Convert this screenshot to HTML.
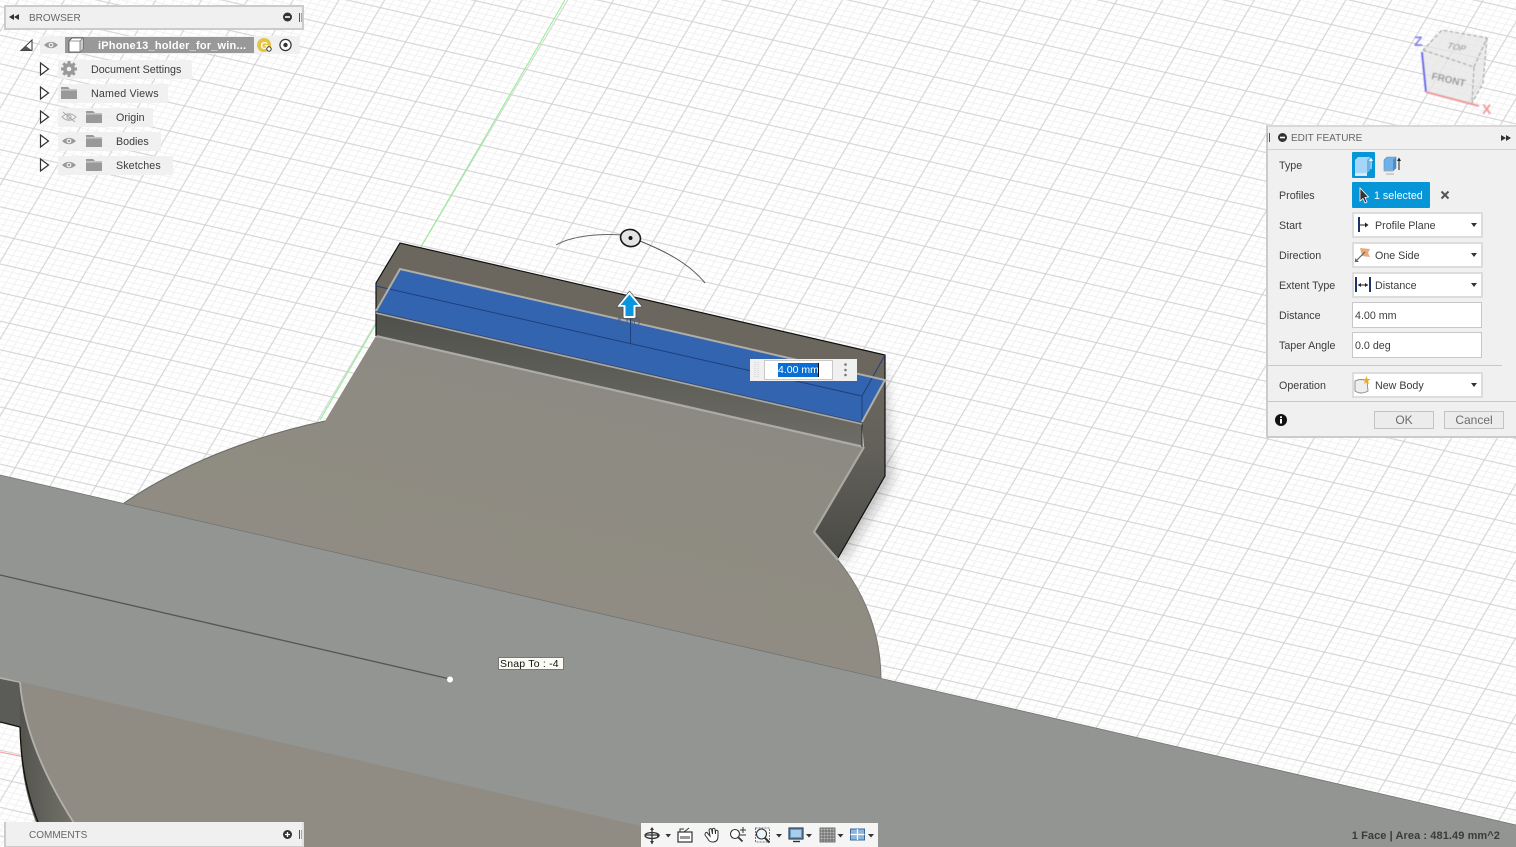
<!DOCTYPE html>
<html>
<head>
<meta charset="utf-8">
<title>Edit Feature</title>
<style>
html,body{margin:0;padding:0;width:1516px;height:847px;overflow:hidden;background:#fff;}
body{position:relative;font-family:"Liberation Sans",sans-serif;font-size:10.7px;color:#3c3c3c;}
.a{position:absolute;white-space:nowrap;}
svg{position:absolute;left:0;top:0;overflow:visible;}
.panel{position:absolute;background:#f0f0f0;box-sizing:border-box;border:2px solid #cbcbcb;}
.row{position:absolute;background:rgba(240,240,240,.9);}
.lab{position:absolute;left:1279px;line-height:14px;white-space:nowrap;}
.box{position:absolute;left:1352px;width:131px;height:26px;box-sizing:border-box;background:#fff;border:2px solid #dcdcdc;line-height:24px;padding-left:21px;white-space:nowrap;}
.inp{padding-left:2px;border:1px solid #c8c8c8;width:130px;line-height:26px;}
.car{position:absolute;right:4px;top:9px;width:0;height:0;border-left:3.5px solid transparent;border-right:3.5px solid transparent;border-top:4px solid #333;}
.btn{position:absolute;top:411px;width:60px;height:18px;box-sizing:border-box;border:1px solid #c4c4c4;background:#ececec;text-align:center;line-height:16px;font-size:12px;color:#6d6d6d;}
</style>
</head>
<body>
<svg width="1516" height="847" viewBox="0 0 1516 847">
<defs>
<pattern id="grid" patternUnits="userSpaceOnUse" width="50" height="50" patternTransform="matrix(.806 .184 .2994 -.5036 946.665 93.99)">
<g fill="#f0f0f0">
<rect x="4.4" y="0" width="1.2" height="50"/><rect x="14.4" y="0" width="1.2" height="50"/><rect x="34.4" y="0" width="1.2" height="50"/><rect x="44.4" y="0" width="1.2" height="50"/>
<rect y="4.2" x="0" height="1.6" width="50"/><rect y="14.2" x="0" height="1.6" width="50"/><rect y="34.2" x="0" height="1.6" width="50"/><rect y="44.2" x="0" height="1.6" width="50"/>
</g>
<g fill="#d0d0d0">
<rect x="24.4" y="0" width="1.3" height="50"/><rect y="24.1" x="0" height="1.8" width="50"/>
</g>
</pattern>
<linearGradient id="wallR" x1="0" y1="0" x2="0" y2="1"><stop offset="0" stop-color="#6c695f"/><stop offset=".45" stop-color="#63615a"/><stop offset="1" stop-color="#4a4a45"/></linearGradient>
<linearGradient id="wallF" x1="0" y1="0" x2="0" y2="1"><stop offset="0" stop-color="#4f504b"/><stop offset="1" stop-color="#6e6d66"/></linearGradient>
<linearGradient id="wallL" x1="0" y1="0" x2="1" y2="0"><stop offset="0" stop-color="#54544e"/><stop offset="1" stop-color="#7d7b73"/></linearGradient>
<linearGradient id="tan" gradientUnits="userSpaceOnUse" x1="640" y1="360" x2="580" y2="620"><stop offset="0" stop-color="#8a8a83"/><stop offset=".4" stop-color="#8e8b82"/><stop offset="1" stop-color="#908c83"/></linearGradient>
<filter id="b6" x="-30%" y="-30%" width="160%" height="160%"><feGaussianBlur stdDeviation="6"/></filter>
<filter id="b1" x="-10%" y="-10%" width="120%" height="120%"><feGaussianBlur stdDeviation=".55"/></filter>
</defs>

<rect width="1516" height="847" fill="#fff"/>
<rect width="1516" height="847" fill="url(#grid)"/>

<!-- axes -->
<line x1="320" y1="420" x2="565" y2="0" stroke="#8fef8f" stroke-width="1"/>
<line x1="0" y1="752" x2="24" y2="757" stroke="#f09a9a" stroke-width="1"/>

<!-- soft shadow -->
<path d="M885,360 L893,480 L842,565 L830,540 Z" fill="#000" opacity=".22" filter="url(#b6)"/>

<!-- top face of back wall -->
<path d="M400,243 L885,355 L885,382 L862,422 L376,311 L376,283 Z" fill="#6b675e"/>
<!-- front wall -->
<path d="M376,311 L862,422 L862,447 L376,336 Z" fill="url(#wallF)"/>
<!-- right wall -->
<path d="M885,355 L885,476 L838,558 L814,532 L864,447 L862,422 L885,382 Z" fill="url(#wallR)"/>

<!-- tan base -->
<path d="M376,336 L864,447 L814,532 L838,560 C866,595 881,635 881,680 L881,847 L90,847 C50,790 24,735 20,682 L124,503 C180,465 250,437 325,421 Z" fill="url(#tan)"/>
<path d="M864,447 L814,532 L838,560" fill="none" stroke="#aaa9a2" stroke-width="2.2"/>
<path d="M376,336 L864,447" fill="none" stroke="#acaba5" stroke-width="2.2"/>
<path d="M838,558 L885,476 L885,355 L400,243 L376,283 L376,336" fill="none" stroke="#111" stroke-width="1.2"/>
<path d="M325,421 C250,437 180,465 124,503" fill="none" stroke="#6a6a66" stroke-width="1"/>
<path d="M838,560 C866,595 881,635 881,680" fill="none" stroke="#77766f" stroke-width="1"/>

<!-- blue face -->
<path d="M400,269 L885,380 L862,422 L376,311 Z" fill="#3364b0"/>
<path d="M376,286 L862,396 L885,355" fill="none" stroke="#1f3f7c" stroke-width="1"/>
<line x1="862" y1="396" x2="862" y2="422" stroke="#1f3f7c" stroke-width="1"/>
<line x1="862" y1="423" x2="862" y2="447" stroke="#2a2a28" stroke-width="1"/>
<path d="M376,311 L400,269 L885,380 L862,422" fill="none" stroke="#b0aea8" stroke-width="2"/>
<path d="M376,313 L862,424" fill="none" stroke="#a8a7a1" stroke-width="1.6"/>
<line x1="376" y1="311.5" x2="862" y2="422.5" stroke="#21478c" stroke-width=".8"/>

<!-- lower-left wall -->
<path d="M20,682 C24,735 50,790 90,847 L46,847 C30,810 20,780 20,727 Z" fill="url(#wallL)"/>
<path d="M0,677 L20,682 L20,727 L0,722 Z" fill="#5b5c57"/>
<path d="M20,727 C21,770 30,802 38,822" fill="none" stroke="#111" stroke-width="1.3"/>
<path d="M0,722 L20,727" stroke="#111" stroke-width="1.2" fill="none"/>
<path d="M0,678 L20,682 C24,735 50,790 90,847" fill="none" stroke="#b3b1ab" stroke-width="1.8"/>

<!-- gray band -->
<path d="M0,475 L1516,825 L1516,847 L731,847 L0,677 Z" fill="#939593"/>
<line x1="0" y1="475" x2="1516" y2="825" stroke="#727472" stroke-width=".8"/>
<line x1="0" y1="575" x2="450" y2="679" stroke="#55574f" stroke-width="1.3"/>
<circle cx="450" cy="679.5" r="3" fill="#fff"/>

<!-- gizmo -->
<path d="M556,245 C570,237 595,233 622,235" fill="none" stroke="#666" stroke-width="1"/>
<path d="M640,241 C662,250 688,262 705,283" fill="none" stroke="#555" stroke-width="1"/>
<ellipse cx="630.5" cy="238" rx="10" ry="8.5" fill="#e4e4e4" stroke="#1a1a1a" stroke-width="1.6" transform="rotate(12 630.5 238)"/>
<circle cx="630.5" cy="238" r="2" fill="#111"/>
<line x1="630.5" y1="318" x2="630.5" y2="343" stroke="#1f3f7c" stroke-width="1"/>
<text x="615" y="326" font-family="Liberation Sans" font-size="13" fill="#4a5d7c" opacity=".8">4.00</text>
<path d="M629.5,293 L640.5,306 L634.5,306 L634.5,317 L624.5,317 L624.5,306 L618.5,306 Z" fill="#0a96dc" stroke="#fff" stroke-width="2" stroke-linejoin="round"/>
<path d="M629.5,291 L642.5,307 L636,307 L636,318.5 L623,318.5 L623,307 L616.5,307 Z" fill="none" stroke="#44505a" stroke-width=".6"/>

<!-- view cube -->
<g filter="url(#b1)">
<path d="M1423,50 L1442,30 L1487,38 L1483,83 L1472,103 L1426,92 Z" fill="#e6e6e6" opacity=".75"/>
<path d="M1423,50 L1474,67 L1472,103 M1474,67 L1487,38 L1442,30 L1423,50 M1487,38 L1483,83 L1472,103" fill="none" stroke="#999" stroke-width="1" stroke-dasharray="4 2"/>
<path d="M1422,52 L1426,92" stroke="#6a6ae8" stroke-width="2" fill="none"/>
<path d="M1426,92 L1479,106" stroke="#ee9a9a" stroke-width="2" fill="none"/>
<text x="1414" y="46" font-family="Liberation Sans" font-size="14" font-weight="bold" fill="#8282e6">Z</text>
<text x="1482" y="114" font-family="Liberation Sans" font-size="14" font-weight="bold" fill="#ee9a9a">X</text>
<text transform="translate(1446,48) rotate(12) skewX(-20)" font-family="Liberation Sans" font-size="9" font-weight="bold" fill="#aaa">TOP</text>
<text transform="translate(1431,79) rotate(13)" font-family="Liberation Sans" font-size="10" font-weight="bold" fill="#999">FRONT</text>
</g>
</svg>

<!-- BROWSER -->
<div class="panel" style="left:4px;top:5px;width:300px;height:25px;"></div>
<svg width="1516" height="60">
<path d="M9,17 L14,14 L14,20 Z M14,17 L19,14 L19,20 Z" fill="#333"/>
<circle cx="287.5" cy="17" r="4.5" fill="#333"/><rect x="285" y="16.2" width="5" height="1.6" fill="#fff"/>
<rect x="299" y="13" width="1" height="9" fill="#555"/><rect x="301" y="13" width="1" height="9" fill="#aaa"/>
</svg>
<div class="a" style="left:29px;top:12px;line-height:13px;font-size:10px;color:#666;">BROWSER</div>

<div class="row" style="left:40px;top:36px;width:260px;height:18px;"></div>
<div class="a" style="left:65px;top:37px;width:189px;height:16px;background:#999;"></div>
<div class="a" style="left:98px;top:39px;line-height:14px;font-size:11px;font-weight:bold;color:#fff;letter-spacing:.2px;">iPhone13_holder_for_win...</div>
<div class="row" style="left:58px;top:60px;width:134px;height:19px;"></div>
<div class="row" style="left:58px;top:84px;width:110px;height:19px;"></div>
<div class="row" style="left:58px;top:108px;width:95px;height:19px;"></div>
<div class="row" style="left:58px;top:132px;width:103px;height:19px;"></div>
<div class="row" style="left:58px;top:156px;width:115px;height:19px;"></div>
<div class="a" style="left:91px;top:63px;line-height:14px;">Document Settings</div>
<div class="a" style="left:91px;top:87px;line-height:14px;letter-spacing:.18px;">Named Views</div>
<div class="a" style="left:116px;top:111px;line-height:14px;">Origin</div>
<div class="a" style="left:116px;top:135px;line-height:14px;">Bodies</div>
<div class="a" style="left:116px;top:159px;line-height:14px;letter-spacing:.1px;">Sketches</div>

<svg width="320" height="180">
<!-- expander triangles -->
<path d="M21,50.5 L32,50.5 L32,40 Z" fill="#fff" stroke="#333" stroke-width="1"/>
<path d="M21,50.5 L32,50.5 L26,46 Z" fill="#555"/>
<g fill="#fff" stroke="#333" stroke-width="1.2">
<path d="M40.5,63 L48.5,69 L40.5,75 Z"/><path d="M40.5,87 L48.5,93 L40.5,99 Z"/><path d="M40.5,111 L48.5,117 L40.5,123 Z"/><path d="M40.5,135 L48.5,141 L40.5,147 Z"/><path d="M40.5,159 L48.5,165 L40.5,171 Z"/>
</g>
<!-- eye top -->
<path d="M44,45 Q51,38.5 58,45 Q51,51.5 44,45 Z" fill="#9a9a9a"/><circle cx="51" cy="45" r="2.4" fill="#f0f0f0"/><circle cx="51" cy="45" r="1.2" fill="#9a9a9a"/>
<!-- component cube -->
<path d="M69,41 L72,38 L83,38 L83,49 L80,52 L69,52 Z" fill="#fff" stroke="#444" stroke-width=".8"/>
<path d="M80,41 L83,38 L83,49 L80,52 Z" fill="#ccc"/>
<path d="M69,41 L80,41 L83,38 M80,41 L80,52" fill="none" stroke="#777" stroke-width=".8"/>
<!-- G badge -->
<circle cx="264" cy="45" r="7" fill="#e4c441"/>
<text x="260.5" y="49" font-family="Liberation Sans" font-size="10" font-weight="bold" fill="#fff">G</text>
<circle cx="269" cy="49" r="2.2" fill="#fff" stroke="#333" stroke-width="1"/>
<!-- radio -->
<circle cx="285.5" cy="45" r="5.6" fill="#fff" stroke="#333" stroke-width="1.2"/>
<circle cx="285.5" cy="45" r="2.2" fill="#333"/>
<!-- gear -->
<circle cx="69" cy="69" r="6" fill="#999"/>
<path d="M69,61 L69,77 M61,69 L77,69 M63.3,63.3 L74.7,74.7 M74.7,63.3 L63.3,74.7" stroke="#999" stroke-width="3"/>
<circle cx="69" cy="69" r="2.3" fill="#f0f0f0"/>
<!-- folders -->
<g fill="#999">
<path d="M61,87 L68,87 L70,89 L77,89 L77,99 L61,99 Z"/>
<path d="M86,111 L93,111 L95,113 L102,113 L102,123 L86,123 Z"/>
<path d="M86,135 L93,135 L95,137 L102,137 L102,147 L86,147 Z"/>
<path d="M86,159 L93,159 L95,161 L102,161 L102,171 L86,171 Z"/>
</g>
<rect x="61" y="89.5" width="16" height=".8" fill="#f0f0f0"/><rect x="86" y="113.5" width="16" height=".8" fill="#f0f0f0"/><rect x="86" y="137.5" width="16" height=".8" fill="#f0f0f0"/><rect x="86" y="161.5" width="16" height=".8" fill="#f0f0f0"/>
<!-- eyes -->
<path d="M62,117 Q69,110.5 76,117 Q69,123.5 62,117 Z" fill="none" stroke="#aaa" stroke-width="1"/><circle cx="69" cy="117" r="2" fill="none" stroke="#aaa"/><line x1="63" y1="112" x2="75" y2="122" stroke="#aaa"/>
<path d="M62,141 Q69,134.5 76,141 Q69,147.5 62,141 Z" fill="#999"/><circle cx="69" cy="141" r="2.4" fill="#f0f0f0"/><circle cx="69" cy="141" r="1.2" fill="#999"/>
<path d="M62,165 Q69,158.5 76,165 Q69,171.5 62,165 Z" fill="#999"/><circle cx="69" cy="165" r="2.4" fill="#f0f0f0"/><circle cx="69" cy="165" r="1.2" fill="#999"/>
</svg>

<!-- Snap tooltip -->
<div class="a" style="left:498px;top:657px;width:66px;height:13px;box-sizing:border-box;background:#fbfbf3;border:1px solid #777;font-size:10.5px;line-height:13px;padding-left:1px;letter-spacing:.2px;color:#111;">Snap To : -4</div>

<!-- Input box -->
<div class="a" style="left:750px;top:359px;width:107px;height:22px;background:#f0f0f0;"></div>
<div class="a" style="left:764px;top:360px;width:69px;height:20px;box-sizing:border-box;background:#fff;border:1px solid #c8c8c8;"></div>
<div class="a" style="left:778px;top:363px;width:41px;height:14px;background:#0a6fd4;color:#fff;font-size:10.5px;line-height:15px;overflow:hidden;">4.00 mm</div>
<div class="a" style="left:818px;top:363px;width:1px;height:14px;background:#000;"></div>
<svg width="1516" height="400">
<circle cx="845.5" cy="364.5" r="1.3" fill="#777"/><circle cx="845.5" cy="370" r="1.3" fill="#777"/><circle cx="845.5" cy="375" r="1.3" fill="#777"/>
<line x1="755" y1="362" x2="755" y2="378" stroke="#ccc" stroke-dasharray="1 1"/><line x1="758" y1="362" x2="758" y2="378" stroke="#ccc" stroke-dasharray="1 1"/>
</svg>

<!-- EDIT FEATURE -->
<div class="panel" style="left:1266px;top:125px;width:252px;height:313px;border-top-color:#d8d8d8;"></div>
<div class="a" style="left:1268px;top:149px;width:248px;height:1px;background:#d2d2d2;"></div>
<div class="a" style="left:1268px;top:365px;width:234px;height:1px;background:#c8c8c8;"></div>
<div class="a" style="left:1268px;top:401px;width:248px;height:1px;background:#c8c8c8;"></div>
<div class="a" style="left:1291px;top:132px;line-height:13px;font-size:10px;color:#666;">EDIT FEATURE</div>
<div class="lab" style="top:159px;">Type</div>
<div class="lab" style="top:189px;">Profiles</div>
<div class="lab" style="top:219px;">Start</div>
<div class="lab" style="top:249px;">Direction</div>
<div class="lab" style="top:279px;">Extent Type</div>
<div class="lab" style="top:309px;">Distance</div>
<div class="lab" style="top:339px;">Taper Angle</div>
<div class="lab" style="top:379px;">Operation</div>

<div class="a" style="left:1352px;top:152px;width:23px;height:26px;background:#0696d7;border-radius:1px;"></div>
<div class="a" style="left:1352px;top:182px;width:78px;height:26px;background:#0696d7;border-radius:1px;color:#fff;line-height:28px;padding-left:22px;box-sizing:border-box;">1 selected</div>
<div class="box" style="top:212px;">Profile Plane<span class="car"></span></div>
<div class="box" style="top:242px;">One Side<span class="car"></span></div>
<div class="box" style="top:272px;">Distance<span class="car"></span></div>
<div class="box inp" style="top:302px;">4.00 mm</div>
<div class="box inp" style="top:332px;">0.0 deg</div>
<div class="box" style="top:372px;">New Body<span class="car"></span></div>
<div class="btn" style="left:1374px;">OK</div>
<div class="btn" style="left:1444px;">Cancel</div>

<svg width="1516" height="440">
<rect x="1269" y="133" width="1" height="9" fill="#555"/><rect x="1267" y="133" width="1" height="9" fill="#aaa"/>
<circle cx="1282.5" cy="137.5" r="4.5" fill="#333"/><rect x="1280" y="136.7" width="5" height="1.6" fill="#fff"/>
<path d="M1501,135 L1506,138 L1501,141 Z M1506,135 L1511,138 L1506,141 Z" fill="#333"/>
<!-- type icons -->
<path d="M1355,160 L1358,157 L1370,157 L1370,170 L1367,173 L1355,173 Z" fill="#a5d6f7"/><path d="M1367,160 L1370,157 L1370,170 L1367,173 Z" fill="#6ab4e4"/>
<rect x="1355" y="173" width="12" height="3" fill="#d8eaf5"/>
<rect x="1370.5" y="160" width="1" height="9" fill="#fff"/><path d="M1369,161 L1371,157.5 L1373,161 Z" fill="#fff"/>
<path d="M1384,160 L1387,157 L1396,157 L1396,168 L1393,171 L1384,171 Z" fill="#6fb1e6" stroke="#5a8fc0" stroke-width=".6"/><path d="M1393,160 L1396,157 L1396,168 L1393,171 Z" fill="#4c8ecb"/>
<path d="M1384,171 L1393,171 M1386,174 L1394,174" stroke="#aaa"/>
<rect x="1398.5" y="160" width="1" height="10" fill="#222"/><path d="M1397,161 L1399,157.5 L1401,161 Z" fill="#222"/>
<!-- cursor -->
<path d="M1360,188 L1360,201 L1363,198.5 L1365,203 L1367,202 L1365,197.5 L1368.5,197 Z" fill="#333" stroke="#fff" stroke-width=".8"/>
<path d="M1441.5,191.5 L1448.5,198.5 M1448.5,191.5 L1441.5,198.5" stroke="#555" stroke-width="2"/>
<!-- start icon -->
<rect x="1358" y="217" width="2" height="15" fill="#1d3566"/>
<line x1="1360" y1="225" x2="1367" y2="225" stroke="#222"/><path d="M1365,222.5 L1368.5,225 L1365,227.5 Z" fill="#222"/>
<!-- direction icon -->
<path d="M1360,248 L1370,249 L1368,253 L1370,257 L1362,256 Z" fill="#eda877"/>
<line x1="1355" y1="262" x2="1365" y2="252" stroke="#666" stroke-width="1.2"/><path d="M1355,262 L1355,258 L1359,262 Z" fill="#666"/>
<!-- distance icon -->
<rect x="1355" y="277" width="2" height="15" fill="#1d3566"/><rect x="1369" y="277" width="2" height="15" fill="#1d3566"/>
<line x1="1358" y1="285" x2="1368" y2="285" stroke="#222"/><path d="M1358,285 L1361,283 L1361,287 Z M1368,285 L1365,283 L1365,287 Z" fill="#222"/>
<!-- new body -->
<path d="M1355,381 Q1361,378 1367,381 L1368,391 Q1361,395 1355,391 Z" fill="#eee" stroke="#888" stroke-width=".9"/>
<path d="M1366.5,376 L1367.5,379 L1370.5,379 L1368,381 L1369,384 L1366.5,382.3 L1364,384 L1365,381 L1362.5,379 L1365.5,379 Z" fill="#f3a81e"/>
<!-- info -->
<circle cx="1281" cy="420" r="6" fill="#111"/>
<rect x="1280" y="419" width="2" height="4.5" fill="#fff"/><rect x="1280" y="416.3" width="2" height="1.8" fill="#fff"/>
</svg>

<!-- COMMENTS -->
<div class="a" style="left:4px;top:822px;width:300px;height:25px;box-sizing:border-box;background:#f0f0f0;border-left:2px solid #cbcbcb;border-right:2px solid #e0e0e0;border-bottom:1px solid #cbcbcb;"></div>
<div class="a" style="left:29px;top:829px;line-height:13px;font-size:10px;color:#666;">COMMENTS</div>

<!-- Bottom toolbar -->
<div class="a" style="left:641px;top:823px;width:237px;height:24px;background:#f5f5f5;"></div>
<svg width="1516" height="847">
<circle cx="287.5" cy="834.5" r="4.5" fill="#333"/><path d="M285,834.5 H290 M287.5,832 V837" stroke="#fff" stroke-width="1.3"/>
<rect x="299" y="830" width="1" height="9" fill="#555"/><rect x="301" y="830" width="1" height="9" fill="#aaa"/>

<!-- orbit -->
<path d="M652,828 V844 M645,835 H659" stroke="#333" stroke-width="1.3"/>
<ellipse cx="652" cy="835.5" rx="7" ry="3" fill="none" stroke="#333" stroke-width="1.3"/>
<path d="M652,827 L650,830 L654,830 Z M652,844 L650,841 L654,841 Z M660,835 L657,833 L657,837 Z" fill="#333"/>
<path d="M665.5,834 L671,834 L668.2,837.5 Z" fill="#333"/>
<!-- look at -->
<rect x="678" y="832" width="14" height="10" fill="#fff" stroke="#333" stroke-width="1.2"/>
<rect x="680" y="836" width="10" height="3" fill="#999"/>
<path d="M680,832 L680,829 L684,829 M684,832 L689,828" stroke="#333" fill="none"/>
<!-- hand -->
<path d="M705,835 L708,839 Q709,842 713,842 Q718,842 718,836 L718,831 Q716.5,829.5 715.5,831 L715.5,834 L715,829 Q713.5,827.5 712.5,829 L712.5,834 L711.5,829 Q710,828 709,830 L710,836 L707,832.5 Q705,832 705,835 Z" fill="#fff" stroke="#333" stroke-width="1"/>
<!-- zoom +/- -->
<circle cx="735" cy="834" r="4.5" fill="#fff" stroke="#333" stroke-width="1.1"/>
<line x1="738.5" y1="837.5" x2="742.5" y2="841.5" stroke="#333" stroke-width="1.8"/>
<path d="M740,830 H746 M743,827 V833" stroke="#333"/><path d="M740,835 H746" stroke="#333"/>
<!-- fit -->
<rect x="755.5" y="828" width="14" height="14" fill="none" stroke="#777" stroke-dasharray="2 1"/>
<circle cx="761.5" cy="834" r="5" fill="#eaf4fb" stroke="#333" stroke-width="1.1"/>
<line x1="765" y1="838" x2="769.5" y2="842.5" stroke="#333" stroke-width="2"/>
<path d="M776,834 L782,834 L779,837.5 Z" fill="#333"/>
<!-- display -->
<rect x="789" y="828" width="14" height="11" fill="#5f9bd0" stroke="#333" stroke-width="1.1"/>
<rect x="791" y="830" width="10" height="7" fill="#a9cdec"/>
<path d="M793,841.5 H800" stroke="#333" stroke-width="1.4"/>
<path d="M806,834 L812,834 L809,837.5 Z" fill="#333"/>
<!-- grid -->
<rect x="820" y="828" width="15" height="14" fill="#bbb" stroke="#555" stroke-width=".8"/>
<path d="M823,828 V842 M826,828 V842 M829,828 V842 M832,828 V842 M820,831 H835 M820,834 H835 M820,837 H835 M820,840 H835" stroke="#555" stroke-width=".7"/>
<path d="M837.5,834 L843.5,834 L840.5,837.5 Z" fill="#333"/>
<!-- viewports -->
<rect x="850.5" y="829" width="14" height="11" fill="#8db6dc" stroke="#3a6a9c" stroke-width="1"/>
<path d="M857.5,829 V840 M850.5,834.5 H864.5" stroke="#fff" stroke-width="1.2"/>
<path d="M868,834 L874,834 L871,837.5 Z" fill="#333"/>
</svg>

<!-- Status -->
<div class="a" style="right:16px;top:829px;line-height:14px;font-size:11px;font-weight:bold;color:#3a3a3a;letter-spacing:.08px;">1 Face | Area : 481.49 mm^2</div>
</body>
</html>
